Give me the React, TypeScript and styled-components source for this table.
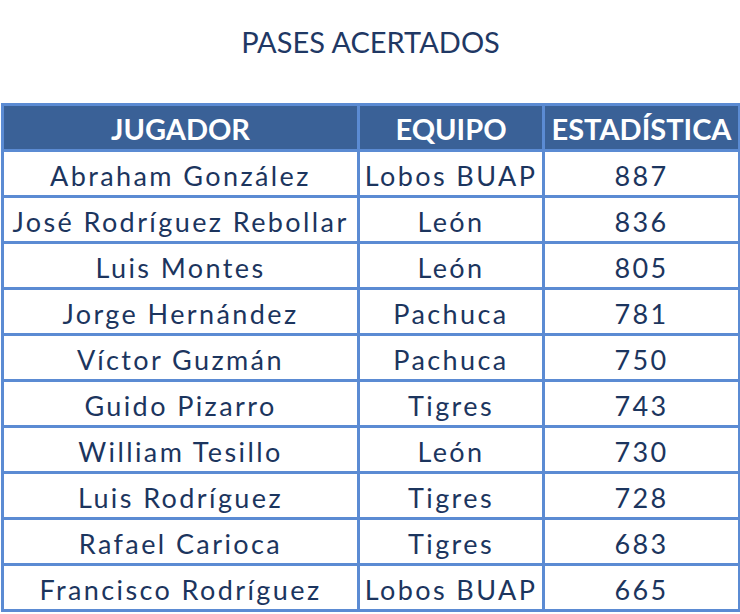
import styled, { createGlobalStyle } from 'styled-components';

interface PlayerRow {
    name: string;
    team: string;
    passes: number;
}

const players: PlayerRow[] = [
    { name: 'Abraham González', team: 'Lobos BUAP', passes: 887 },
    { name: 'José Rodríguez Rebollar', team: 'León', passes: 836 },
    { name: 'Luis Montes', team: 'León', passes: 805 },
    { name: 'Jorge Hernández', team: 'Pachuca', passes: 781 },
    { name: 'Víctor Guzmán', team: 'Pachuca', passes: 750 },
    { name: 'Guido Pizarro', team: 'Tigres', passes: 743 },
    { name: 'William Tesillo', team: 'León', passes: 730 },
    { name: 'Luis Rodríguez', team: 'Tigres', passes: 728 },
    { name: 'Rafael Carioca', team: 'Tigres', passes: 683 },
    { name: 'Francisco Rodríguez', team: 'Lobos BUAP', passes: 665 },
];

const App = () => {
    return (
        <>
            <GlobalStyle />
            <StyledPage>
                <StyledTitle>PASES ACERTADOS</StyledTitle>
                <StyledTable>
                    <colgroup>
                        <col style={{ width: 356 }} />
                        <col style={{ width: 185 }} />
                        <col style={{ width: 196 }} />
                    </colgroup>
                    <thead>
                        <tr>
                            <StyledHeadCell>JUGADOR</StyledHeadCell>
                            <StyledHeadCell>EQUIPO</StyledHeadCell>
                            <StyledHeadCell>ESTADÍSTICA</StyledHeadCell>
                        </tr>
                    </thead>
                    <tbody>
                        {players.map((player) => (
                            <tr key={player.name}>
                                <StyledCell>{player.name}</StyledCell>
                                <StyledCell>{player.team}</StyledCell>
                                <StyledCell>{player.passes}</StyledCell>
                            </tr>
                        ))}
                    </tbody>
                </StyledTable>
            </StyledPage>
        </>
    );
};

const GlobalStyle = createGlobalStyle`
    body {
        margin: 0;
        background-color: #ffffff;
        font-family: Lato, "Open Sans", sans-serif;
    }
`;

const StyledPage = styled.div`
    display: flex;
    flex-direction: column;
    width: 740px;
    padding-left: 1px;
    box-sizing: border-box;
`;

const StyledTitle = styled.h1`
    margin: 0;
    height: 103px;
    display: flex;
    align-items: center;
    justify-content: center;
    padding-bottom: 20px;
    box-sizing: border-box;

    font-size: 29px;
    font-weight: 400;
    color: #1f3864;
`;

const StyledTable = styled.table`
    width: 737px;
    table-layout: fixed;
    border-collapse: collapse;
    border: 3px solid #5b8bd3;
`;

const StyledHeadCell = styled.th`
    height: 46px;
    padding: 2px 0 0;
    box-sizing: border-box;
    border: 3px solid #5b8bd3;
    background-color: #3a6197;

    font-size: 29px;
    font-weight: 700;
    color: #ffffff;
    text-align: center;
    white-space: nowrap;
`;

const StyledCell = styled.td`
    height: 46px;
    padding: 3px 0 0;
    box-sizing: border-box;
    border: 3px solid #5b8bd3;

    font-size: 27px;
    letter-spacing: 2.4px;
    color: #1c355e;
    text-align: center;
    white-space: nowrap;
`;

export default App;
